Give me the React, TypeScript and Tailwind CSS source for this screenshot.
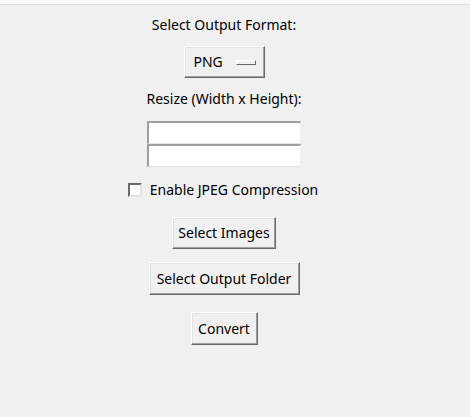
import React from "react";

const font = { fontFamily: '"Noto Sans", "Segoe UI", sans-serif' };

function TkButton({ label, w, h }: { label: string; w: string; h: string }) {
  return (
    <div
      className={`${w} ${h} flex items-center justify-center bg-[#f0f0f0] border border-t-white border-l-white border-r-[#696969] border-b-[#696969] shadow-[inset_-1px_-1px_0_#a0a0a0,inset_1px_1px_0_#e3e3e3] text-[14px] text-black leading-none`}
    >
      {label}
    </div>
  );
}

export default function App() {
  return (
    <div className="w-[470px] h-[417px] bg-[#f0f0f0] flex flex-col" style={font}>
      <div className="h-[5px] bg-[#f9f9f9] border-b border-[#d9d9d9] shrink-0" />
      <div className="w-[448px] flex flex-col items-center">
        <div className="mt-[12px] h-[16px] leading-[16px] text-[14px] text-black">Select Output Format:</div>
        <div className="mt-[13px] w-[81px] h-[32px] flex items-center bg-[#f0f0f0] border border-t-white border-l-white border-r-[#696969] border-b-[#696969] shadow-[inset_-1px_-1px_0_#a0a0a0,inset_1px_1px_0_#e3e3e3] text-[14px] text-black">
          <span className="ml-[9px] leading-none">PNG</span>
          <span className="ml-[13px] w-[20px] h-[5px] bg-[#f0f0f0] border border-t-white border-l-white border-r-[#696969] border-b-[#696969]" />
        </div>
        <div className="mt-[13px] h-[16px] leading-[16px] text-[14px] text-black">Resize (Width x Height):</div>
        <div className="mt-[14px] flex flex-col">
          <div className="w-[154px] h-[23px] bg-white border-t-2 border-l-2 border-t-[#a0a0a0] border-l-[#a0a0a0] border-r border-b border-r-[#f0f0f0] border-b-[#e3e3e3]" />
          <div className="w-[154px] h-[23px] bg-white border-t-2 border-l-2 border-t-[#a0a0a0] border-l-[#a0a0a0] border-r border-b border-r-[#f0f0f0] border-b-[#e3e3e3]" />
        </div>
        <div className="mt-[15px] h-[16px] flex items-center -ml-[2px]">
          <span className="w-[14px] h-[14px] bg-white border-2 border-t-[#696969] border-l-[#696969] border-r-[#e3e3e3] border-b-[#e3e3e3]" />
          <span className="ml-[8px] text-[14px] leading-[16px] text-black">Enable JPEG Compression</span>
        </div>
        <div className="mt-[19px]">
          <TkButton label="Select Images" w="w-[104px]" h="h-[32px]" />
        </div>
        <div className="mt-[13px]">
          <TkButton label="Select Output Folder" w="w-[151px]" h="h-[33px]" />
        </div>
        <div className="mt-[17px]">
          <TkButton label="Convert" w="w-[67px]" h="h-[33px]" />
        </div>
      </div>
    </div>
  );
}
